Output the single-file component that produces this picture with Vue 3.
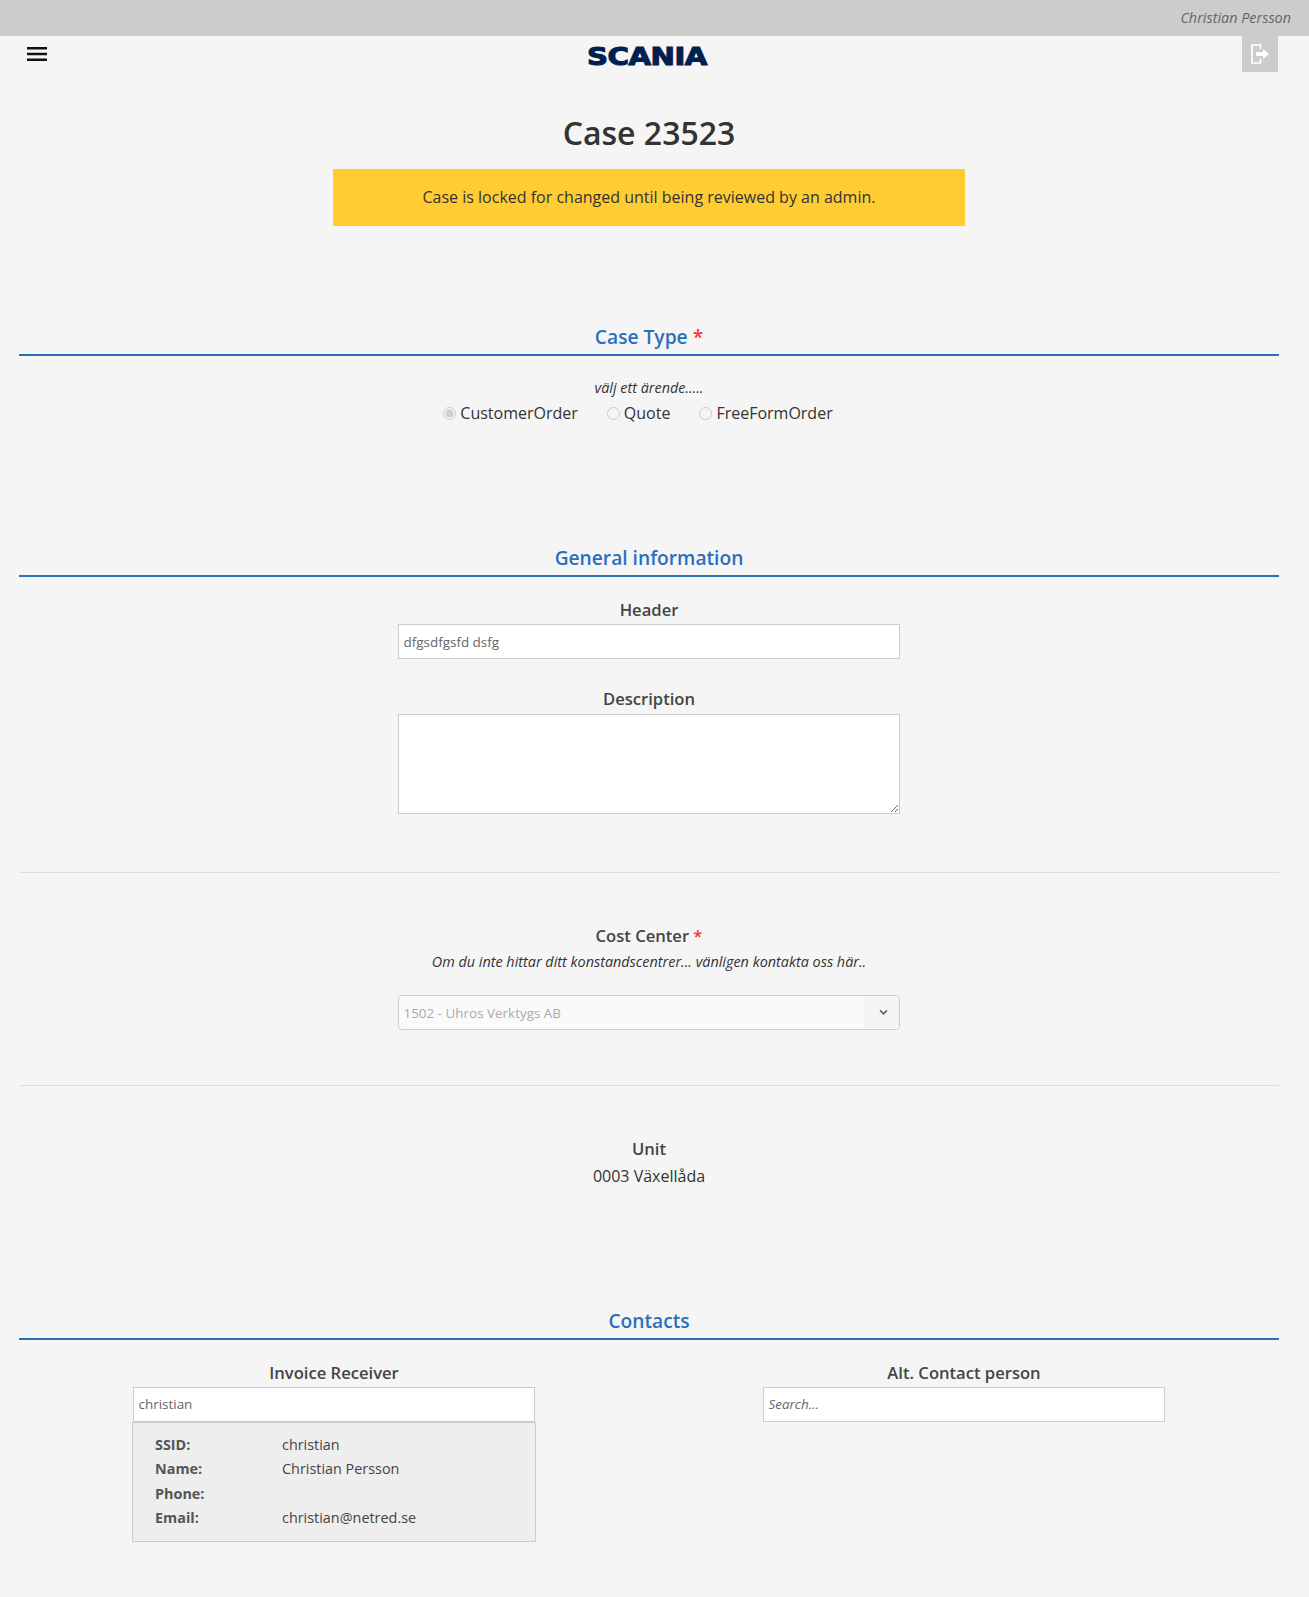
<script setup>
const details = [
  { label: 'SSID:', value: 'christian' },
  { label: 'Name:', value: 'Christian Persson' },
  { label: 'Phone:', value: '' },
  { label: 'Email:', value: 'christian@netred.se' }
]
const types = [
  { id: 'CustomerOrder', checked: true },
  { id: 'Quote', checked: false },
  { id: 'FreeFormOrder', checked: false }
]
</script>

<template>
  <div class="page">
    <div class="topbar"><span class="user">Christian Persson</span></div>
    <header class="nav">
      <button class="menu" aria-label="Menu">
        <svg width="20" height="14" viewBox="0 0 20 14"><path d="M0 0h20v2.600H0zM0 5.700h20v2.600H0zM0 11.400h20V14H0z" fill="#111" /></svg>
      </button>
      <svg class="logo" width="140" height="30" viewBox="0 0 140 30" role="img" aria-label="SCANIA">
        <text transform="translate(8 24) scale(1.19 1)" class="logo-text">SCANIA</text>
      </svg>
      <button class="logout" aria-label="Log out">
        <svg width="20" height="20" viewBox="0 0 20 20" fill="none">
          <path d="M10.500 5V1H2v18h8.500v-4" stroke="#fff" stroke-width="1.700" />
          <path d="M6 8h7V5L19 10l-6 5v-3H6z" fill="#fff" />
        </svg>
      </button>
    </header>

    <main class="content">
      <h1>Case 23523</h1>
      <div class="alert">Case is locked for changed until being reviewed by an admin.</div>

      <section class="case-type">
        <h2>Case Type <span class="req">*</span></h2>
        <p class="hint">välj ett ärende.....</p>
        <div class="radios">
          <label v-for="t in types" :key="t.id" class="radio">
            <input type="radio" name="type" disabled :checked="t.checked" />{{ t.id }}
          </label>
        </div>
      </section>

      <section class="general">
        <h2>General information</h2>
        <div class="field header-field">
          <label>Header</label>
          <input class="text" value="dfgsdfgsfd dsfg" />
        </div>
        <div class="field desc-field">
          <label>Description</label>
          <textarea class="area"></textarea>
        </div>
      </section>

      <hr class="rule first" />

      <div class="field cost">
        <label>Cost Center <span class="req">*</span></label>
        <p class="hint">Om du inte hittar ditt konstandscentrer... vänligen kontakta oss här..</p>
        <div class="select">
          <span class="select-value">1502 - Uhros Verktygs AB</span>
          <span class="select-btn">
            <svg width="9" height="7" viewBox="0 0 10 7" fill="none"><path d="M1.200 1.200 5 5l3.800-3.800" stroke="#666" stroke-width="2" /></svg>
          </span>
        </div>
      </div>

      <hr class="rule second" />

      <div class="unit">
        <label>Unit</label>
        <div class="unit-value">0003 Växellåda</div>
      </div>

      <section class="contacts">
        <h2>Contacts</h2>
        <div class="columns">
          <div class="contact">
            <label>Invoice Receiver</label>
            <input class="text" value="christian" />
            <dl class="panel">
              <div v-for="d in details" :key="d.label" class="row">
                <dt>{{ d.label }}</dt>
                <dd>{{ d.value }}</dd>
              </div>
            </dl>
          </div>
          <div class="contact">
            <label>Alt. Contact person</label>
            <input class="text search" placeholder="Search..." />
          </div>
        </div>
      </section>
    </main>
  </div>
</template>

<style>
html, body { margin: 0; background: #f5f5f5; }
</style>

<style scoped>
.page {
  min-height: 1597px;
  background: #f5f5f5;
  color: #333;
  font-family: "Open Sans", "Liberation Sans", sans-serif;
  font-size: 16px;
  box-sizing: border-box;
}
.topbar {
  height: 36px;
  background: #ccc;
  display: flex;
  align-items: center;
  justify-content: flex-end;
  padding: 0 18px 2px 0;
  box-sizing: border-box;
}
.user { font-style: italic; font-size: 14.4px; color: #666; }
.nav {
  position: relative;
  height: 36px;
  display: flex;
  justify-content: center;
  padding: 0 30px 0 19px;
}
.menu {
  position: absolute;
  left: 27px;
  top: 11px;
  padding: 0;
  border: 0;
  background: none;
  line-height: 0;
}
.logo { margin-top: 5px; }
.logo-text {
  font-family: "DejaVu Sans", sans-serif;
  font-weight: 700;
  font-size: 24.500px;
  letter-spacing: -0.400px;
  fill: #002050;
  stroke: #002050;
  stroke-width: 1.100px;
}
.logout {
  position: absolute;
  right: 31px;
  top: 0;
  width: 36px;
  height: 36px;
  border: 0;
  padding: 0;
  background: #ccc;
  display: flex;
  align-items: center;
  justify-content: center;
}
.content { padding: 0 30px 0 19px; }
h1 {
  margin: 0;
  padding-top: 39px;
  font-size: 32px;
  line-height: 44px;
  font-weight: 600;
  text-align: center;
  color: #333;
}
.alert {
  width: 632px;
  height: 57px;
  margin: 14px auto 0;
  padding-bottom: 2px;
  box-sizing: border-box;
  background: #fc3;
  display: flex;
  align-items: center;
  justify-content: center;
  color: #333;
}
h2 {
  margin: 0;
  height: 36px;
  line-height: 34px;
  box-sizing: border-box;
  border-bottom: 2px solid #2b6fbb;
  font-size: 19.200px;
  font-weight: 600;
  color: #2b6fbb;
  text-align: center;
}
.req { color: #f33; }
.case-type { margin-top: 94px; }
.hint { margin: 0; font-style: italic; font-size: 14.4px; line-height: 20px; text-align: center; color: #333; }
.case-type .hint { margin-top: 22px; }
.radios { display: flex; justify-content: center; gap: 25px; line-height: 26px; margin-top: 2px; padding-right: 26px; }
.radio { display: flex; align-items: center; color: #333; }
.radio input { margin: 0 4px 0 4px; width: 13px; height: 13px; }
.general { margin-top: 115px; }
label { font-weight: 600; font-size: 16.600px; color: #444; }
.field { display: flex; flex-direction: column; align-items: center; }
.field > label, .unit > label, .contact > label { line-height: 22px; display: block; text-align: center; }
.radio { font-weight: 400; font-size: 16px; }
.header-field { margin-top: 22px; }
.header-field .text { margin-top: 3px; }
.text, .area {
  display: block;
  box-sizing: border-box;
  background: #fff;
  border: 1px solid #ccc;
  border-radius: 0;
  outline: 0;
  font-family: inherit;
  font-size: 13.44px;
  color: #666;
  padding: 0 4.500px;
}
.text { height: 35px; width: 502px; }
.area { height: 100px; width: 502px; }
.desc-field { margin-top: 29px; }
.desc-field .area { margin-top: 4px; }
.rule { height: 1px; border: 0; background: #ddd; margin: 0; }
.rule.first { margin-top: 58px; }
.cost { margin-top: 52px; }
.cost .hint { margin-top: 5px; }
.select {
  width: 502px;
  height: 35px;
  margin-top: 23px;
  box-sizing: border-box;
  border: 1px solid #ccc;
  border-radius: 4px;
  background: #fafafa;
  display: flex;
  align-items: center;
  overflow: hidden;
}
.select-value { flex: 1; padding-left: 4.500px; font-size: 13.44px; color: #aaa; }
.select-btn {
  width: 35px;
  height: 100%;
  padding-left: 3px;
  box-sizing: border-box;
  background: #f5f5f5;
  display: flex;
  align-items: center;
  justify-content: center;
}
.rule.second { margin-top: 55px; }
.unit { margin-top: 52px; text-align: center; }
.unit-value { margin-top: 5px; line-height: 22px; }
.contacts { margin-top: 117px; }
.columns { display: grid; grid-template-columns: 1fr 1fr; margin-top: 22px; }
.contact { width: 402px; margin: 0 auto; }
.contact .text { width: 402px; margin-top: 3px; padding-bottom: 2px; }
.search::placeholder { font-style: italic; font-size: 13.44px; color: #666; opacity: 1; }
.panel {
  margin: 0 -1px;
  height: 120px;
  box-sizing: border-box;
  padding: 10px 22px;
  background: #eee;
  border: 1px solid #ccc;
  font-size: 14.4px;
}
.row { display: flex; line-height: 24.300px; }
dt { width: 127px; font-weight: 700; color: #555; }
dd { margin: 0; color: #444; }
</style>
